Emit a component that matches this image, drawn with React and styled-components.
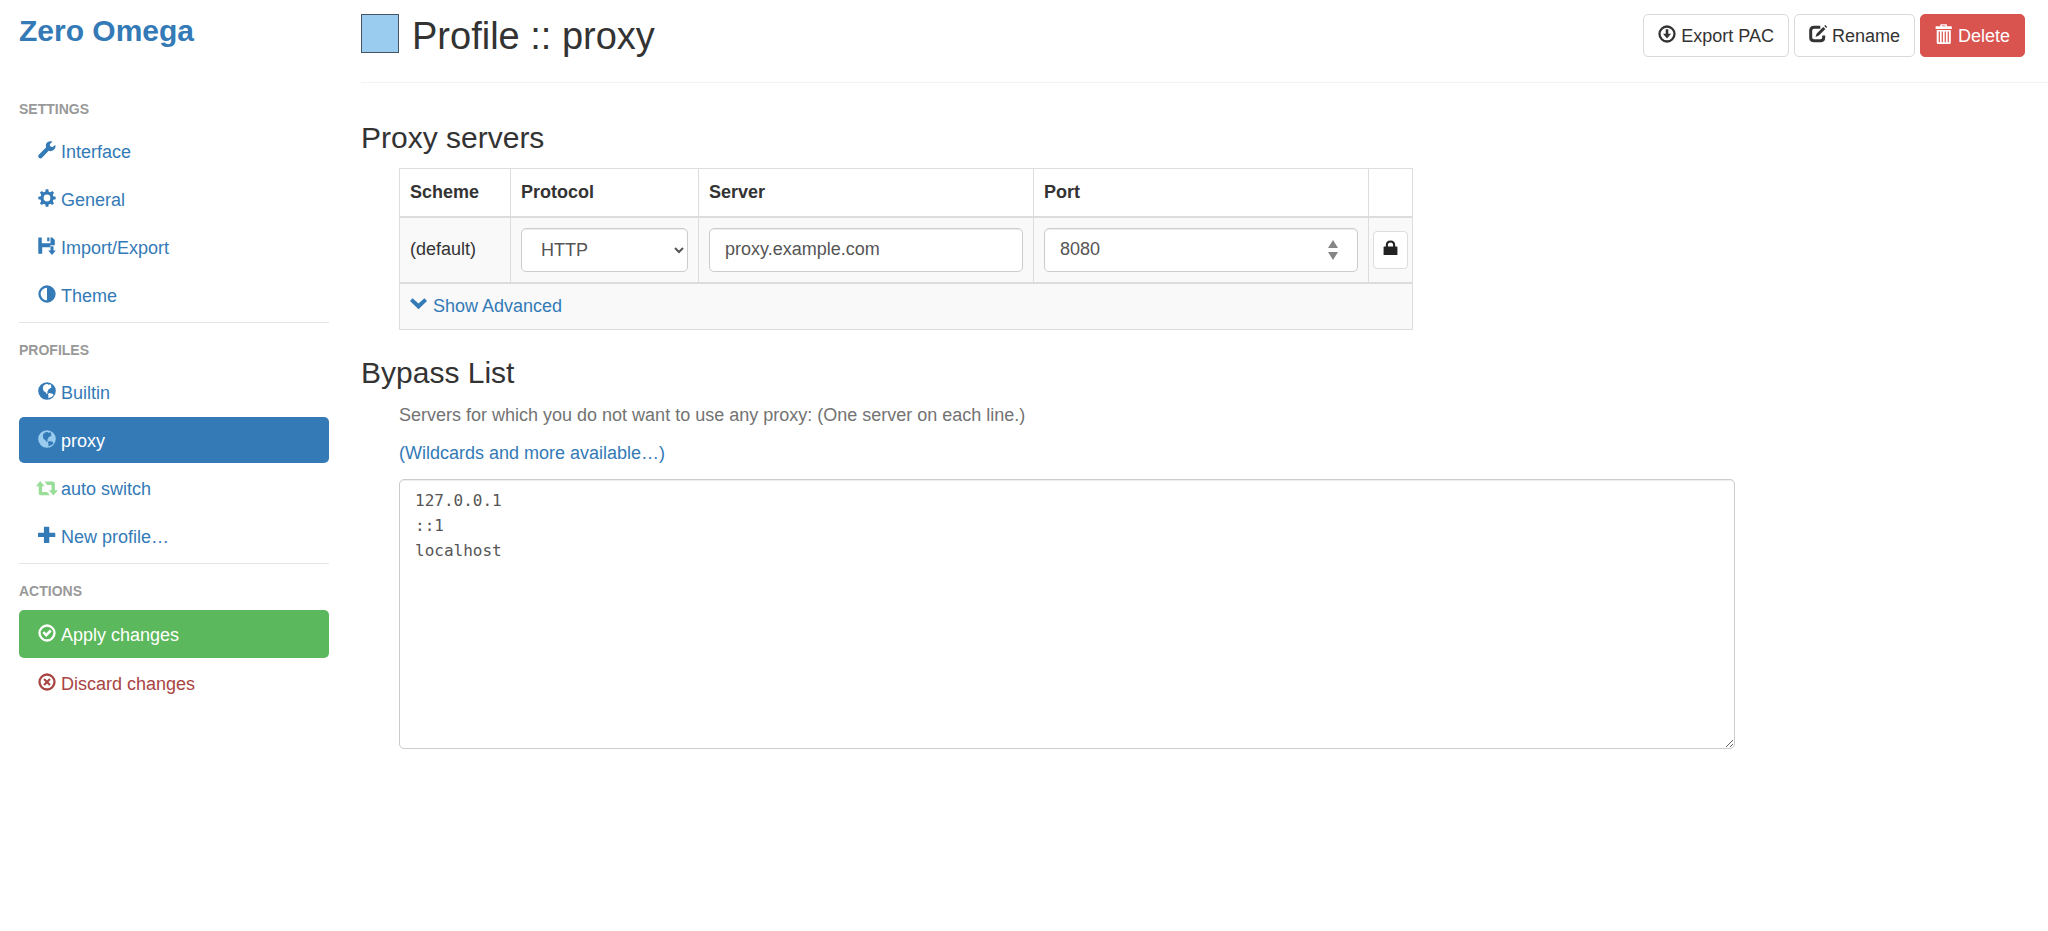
import React, { useState } from 'react';
import styled, { createGlobalStyle, css } from 'styled-components';

const palette = {
  text: '#333',
  link: '#337ab7',
  muted: '#737373',
  heading: '#999',
  border: '#ddd',
  control: '#ccc',
  field: '#555',
  stripe: '#f9f9f9',
  success: '#5cb85c',
  danger: '#d9534f',
  discard: '#a94442',
  proxy: '#99ccee',
  auto: '#99dd99',
};

const GlobalStyle = createGlobalStyle`
  *, *::before, *::after {
    box-sizing: border-box;
  }
  body {
    margin: 0;
    background: #fff;
    color: ${palette.text};
    font-family: 'Liberation Sans', Arial, sans-serif;
    font-size: 18px;
    line-height: 25px;
  }
  button, input, select, textarea {
    font: inherit;
  }
`;

const Layout = styled.div`
  display: flex;
  align-items: flex-start;
`;

/* icons */

const IconSvg = styled.svg`
  flex: none;
  width: 18px;
  height: 18px;
  margin-bottom: 4px;
  overflow: visible;
  fill: currentColor;
  color: ${(props) => props.$color || 'inherit'};
`;

const Ring = () => (
  <circle
    cx="9"
    cy="9"
    r="7.5"
    fill="none"
    stroke="currentColor"
    strokeWidth="2.3"
  />
);

const shapes = {
  wrench: (
    <path d="M17.4 3.9 14.6 6 12.3 5.6 11.8 3.3 14.3.8C12.3-.2 9.700.4 8.500 2.300 7.700 3.600 7.700 5 8.200 6.300L.8 13.700C0 14.600 0 15.900.9 16.800 1.800 17.700 3.100 17.700 4 16.800L10.700 9.800C12.200 10.500 14.200 10.200 15.600 9 17.100 7.700 17.900 5.700 17.400 3.900Z" />
  ),
  cog: (
    <>
      <circle
        cx="9"
        cy="9"
        r="5"
        fill="none"
        stroke="currentColor"
        strokeWidth="3.2"
      />
      {[0, 45, 90, 135, 180, 225, 270, 315].map((deg) => (
        <path
          key={deg}
          d="M7.200 3.200 7.700.3h2.600l.5 2.900z"
          transform={`rotate(${deg} 9 9)`}
        />
      ))}
    </>
  ),
  save: (
    <>
      <path d="M.3.500H3.800V6.300H12.500V.500H14.300L16.800 3V8.300H12.300V10.300H4.200V16.800H.3Z" />
      <path d="M9.200.500h2.200v3.800H9.200z" />
      <path d="M12.500 9.300h3v4.200h2.300L14 18l-3.800-4.500h2.300z" />
    </>
  ),
  adjust: (
    <>
      <Ring />
      <path d="M9 2a7 7 0 0 1 0 14z" />
    </>
  ),
  globe: (
    <path
      fillRule="evenodd"
      d="M9 .2a8.800 8.800 0 1 1 0 17.600A8.800 8.800 0 0 1 9 .2ZM7.400 2.300 5.400 3.700 4.800 6.200 5.600 9 7.600 10.300 8.500 12 9.700 11.300 9.200 9.600 10.300 9 9.900 7.900 11.900 6.600 13.700 5.200 12.700 4.200 13.500 3.100 11.800 2.300 10.700 2.900 9.800 1.900ZM11.400 11 9.900 12.100 10.500 14 10.300 16.200 13.600 15.100 15.700 12.900 14.500 11.800Z"
    />
  ),
  retweet: (
    <>
      <path d="M2.200 2.900 6.600 8.200H4.100V13.900H9L12 17.300H2.600Q.7 17.300.7 15.300V8.200H-2Z" />
      <path d="M6.500 3.500H14.600Q16.900 3.500 16.900 5.700V12.200H19.900L15.300 17.600 10.900 12.200H13.500V6.900H9.300Z" />
    </>
  ),
  plus: (
    <path d="M6.500.8h4.200q.6 0 .6.6V6.800h5.400q.6 0 .6.6v3q0 .6-.6.6h-5.400v5.400q0 .6-.6.6H6.500q-.6 0-.6-.6V11H.6q-.6 0-.6-.6v-3q0-.6.600-.6h5.300V1.400q0-.6.6-.6z" />
  ),
  check: (
    <>
      <Ring />
      <path d="m4.400 9 1.800-1.800 2 2 3.600-3.700 1.900 1.900-5.500 5.500z" />
    </>
  ),
  remove: (
    <>
      <Ring />
      <path d="m6.800 5.300L9 7.500l2.200-2.200 1.500 1.500L10.500 9l2.200 2.200-1.500 1.500L9 10.500l-2.200 2.200-1.500-1.500L7.500 9 5.300 6.800z" />
    </>
  ),
  download: (
    <>
      <Ring />
      <path d="M7.700 4.200h2.600V8.800h2.700L9 13.500 5 8.800h2.700z" />
    </>
  ),
  edit: (
    <>
      <path
        d="M11.300 2.300H5Q1.700 2.300 1.700 5.500V12.500Q1.700 15.700 5 15.700H11.500Q14.700 15.700 14.700 12.500V10.500"
        fill="none"
        stroke="currentColor"
        strokeWidth="3"
      />
      <path d="M14.200 1.900 16.400 4.100 9.900 10.600 6.500 11.900 7.700 8.400ZM15.200.9 16.200 0 18.200 2 17.300 3.100Z" />
    </>
  ),
  trash: (
    <path
      fillRule="evenodd"
      d="M6-.8H11.300Q12 -.8 12 0V1.200H16.300Q16.800 1.200 16.800 1.800V4H.6V1.800Q.6 1.200 1.100 1.200H5.300V0Q5.300-.8 6-.8ZM6.900.4V1.200H10.400V.4ZM1.700 5H15.800V17.500Q15.800 19 14.400 19H3.100Q1.700 19 1.700 17.500ZM3.700 6.500V17.300H4.900V6.500ZM6.700 6.500V17.300H7.900V6.500ZM9.700 6.500V17.300H10.900V6.500ZM12.700 6.500V17.300H13.900V6.500Z"
    />
  ),
  chevron: (
    <path d="M2.600 3.200 8.500 8.400 14.400 3.200 17 6 8.500 14.300 0 6Z" />
  ),
  lock: (
    <path
      fillRule="evenodd"
      d="M3.400 7.200V5.500Q3.400 0 9 0T14.600 5.500V7.200H16.200Q17.300 7.200 17.300 8.200V17.500H.7V8.200Q.7 7.200 1.800 7.200ZM5.900 7.200H12.100V5.500Q12.100 2.300 9 2.300T5.900 5.500Z"
    />
  ),
};

const Icon = ({ name, color }) => (
  <IconSvg viewBox="0 0 18 18" $color={color} aria-hidden="true">
    {shapes[name]}
  </IconSvg>
);

/* sidebar */

const Sidebar = styled.nav`
  flex: none;
  width: 361px;
  padding: 14px 32px 0 19px;
`;

const Brand = styled.a`
  display: block;
  margin-bottom: 52px;
  color: ${palette.link};
  font-size: 30px;
  font-weight: bold;
  line-height: 34px;
  text-decoration: none;
`;

const NavSection = styled.section`
  & + & {
    margin-top: 4px;
    padding-top: 18px;
    border-top: 1px solid #e5e5e5;
  }
`;

const NavTitle = styled.h2`
  margin: 0 0 10px;
  color: ${palette.heading};
  font-size: 14px;
  line-height: 18px;
  text-transform: uppercase;
`;

const NavList = styled.ul`
  display: flex;
  flex-direction: column;
  gap: 2px;
  margin: 0;
  padding: 0;
  list-style: none;
`;

const navTones = {
  active: css`
    background: ${palette.link};
    color: #fff;
  `,
  success: css`
    height: 48px;
    background: ${palette.success};
    color: #fff;
  `,
  discard: css`
    color: ${palette.discard};
  `,
};

const NavLink = styled.a`
  display: flex;
  align-items: center;
  gap: 5px;
  height: 46px;
  padding: 2px 19px 0;
  border-radius: 5px;
  color: ${palette.link};
  text-decoration: none;
  ${(props) => navTones[props.$tone]}
`;

const NavItem = ({ icon, iconColor, tone, children }) => (
  <li>
    <NavLink href="#" $tone={tone}>
      <Icon name={icon} color={iconColor} />
      {children}
    </NavLink>
  </li>
);

/* header */

const Main = styled.main`
  flex: 1;
  min-width: 0;
`;

const PageHeader = styled.header`
  display: flex;
  align-items: flex-start;
  gap: 13px;
  margin-bottom: 38px;
  padding: 14px 23px 23px 0;
  border-bottom: 1px solid #f2f2f2;
`;

const ColorButton = styled.input`
  flex: none;
  width: 38px;
  height: 39px;
  padding: 0;
  border: 1px solid #456;
  background: none;
  &::-webkit-color-swatch-wrapper {
    padding: 0;
  }
  &::-webkit-color-swatch {
    border: 0;
  }
`;

const Title = styled.h1`
  flex: 1;
  margin: 0;
  font-size: 38px;
  font-weight: normal;
  line-height: 45px;
`;

const Actions = styled.div`
  display: flex;
  gap: 5px;
`;

const Button = styled.button`
  display: flex;
  align-items: center;
  gap: 5px;
  height: 43px;
  padding: 1px 14px 0;
  border: 1px solid ${(props) => (props.$danger ? '#d9534f' : '#d9d9d9')};
  border-radius: 5px;
  background: ${(props) => (props.$danger ? palette.danger : '#fff')};
  color: ${(props) => (props.$danger ? '#fff' : palette.text)};
`;

/* content */

const SectionTitle = styled.h3`
  margin: 0 0 14px;
  font-size: 30px;
  font-weight: normal;
  line-height: 33px;
`;

const SectionBody = styled.div`
  margin: 0 0 26px 38px;
`;

const Table = styled.table`
  border-collapse: collapse;
  border: 1px solid ${palette.border};
  th,
  td {
    padding: 10px;
    border: 1px solid ${palette.border};
    text-align: left;
    vertical-align: middle;
  }
  thead th {
    height: 48px;
    border-bottom-width: 2px;
  }
  tbody {
    background: ${palette.stripe};
  }
  tbody + tbody {
    border-top: 2px solid ${palette.border};
  }
`;

const SchemeHead = styled.th`
  width: 111px;
`;

const LockCell = styled.td`
  && {
    padding: 4px;
  }
`;

const control = css`
  display: block;
  height: 44px;
  padding: 0 15px;
  border: 1px solid ${palette.control};
  border-radius: 5px;
  background: #fff;
  color: ${palette.field};
  box-shadow: inset 0 1px 1px rgba(0, 0, 0, 0.075);
`;

const Select = styled.select`
  ${control}
  width: 167px;
`;

const Input = styled.input`
  ${control}
  width: 314px;
  appearance: textfield;
  &::-webkit-inner-spin-button {
    display: none;
  }
`;

const NumberField = styled.div`
  position: relative;
`;

const Spinner = styled.svg`
  position: absolute;
  top: 12px;
  right: 19px;
  width: 12px;
  height: 20px;
  fill: #858585;
  pointer-events: none;
`;

const LockButton = styled.button`
  display: flex;
  align-items: center;
  justify-content: center;
  width: 35px;
  height: 38px;
  padding: 0;
  border: 1px solid ${palette.border};
  border-radius: 4px;
  background: #fff;
  color: #222;
  svg {
    width: 15px;
    height: 16px;
  }
`;

const TextLink = styled.a`
  display: flex;
  align-items: center;
  gap: 5px;
  width: fit-content;
  color: ${palette.link};
  text-decoration: none;
`;

const Help = styled.p`
  margin: 0 0 13px;
  color: ${palette.muted};
`;

const BypassArea = styled.textarea`
  ${control}
  width: 81%;
  height: 270px;
  padding: 8px 15px;
  font-family: 'DejaVu Sans Mono', monospace;
  font-size: 16px;
  resize: vertical;
`;

const App = () => {
  const [color, setColor] = useState(palette.proxy);
  const [bypass, setBypass] = useState('127.0.0.1\n::1\nlocalhost');

  return (
    <Layout>
      <GlobalStyle />
      <Sidebar>
        <Brand href="#">Zero Omega</Brand>
        <NavSection>
          <NavTitle>Settings</NavTitle>
          <NavList>
            <NavItem icon="wrench">Interface</NavItem>
            <NavItem icon="cog">General</NavItem>
            <NavItem icon="save">Import/Export</NavItem>
            <NavItem icon="adjust">Theme</NavItem>
          </NavList>
        </NavSection>
        <NavSection>
          <NavTitle>Profiles</NavTitle>
          <NavList>
            <NavItem icon="globe">Builtin</NavItem>
            <NavItem icon="globe" iconColor={color} tone="active">
              proxy
            </NavItem>
            <NavItem icon="retweet" iconColor={palette.auto}>
              auto switch
            </NavItem>
            <NavItem icon="plus">New profile…</NavItem>
          </NavList>
        </NavSection>
        <NavSection>
          <NavTitle>Actions</NavTitle>
          <NavList>
            <NavItem icon="check" tone="success">
              Apply changes
            </NavItem>
            <NavItem icon="remove" tone="discard">
              Discard changes
            </NavItem>
          </NavList>
        </NavSection>
      </Sidebar>
      <Main>
        <PageHeader>
          <ColorButton
            type="color"
            aria-label="Profile color"
            value={color}
            onChange={(e) => setColor(e.target.value)}
          />
          <Title>Profile :: proxy</Title>
          <Actions>
            <Button type="button">
              <Icon name="download" />
              Export PAC
            </Button>
            <Button type="button">
              <Icon name="edit" />
              Rename
            </Button>
            <Button type="button" $danger>
              <Icon name="trash" />
              Delete
            </Button>
          </Actions>
        </PageHeader>

        <SectionTitle>Proxy servers</SectionTitle>
        <SectionBody>
          <Table>
            <thead>
              <tr>
                <SchemeHead>Scheme</SchemeHead>
                <th>Protocol</th>
                <th>Server</th>
                <th>Port</th>
                <th />
              </tr>
            </thead>
            <tbody>
              <tr>
                <td>(default)</td>
                <td>
                  <Select aria-label="Protocol" defaultValue="HTTP">
                    <option>HTTP</option>
                    <option>HTTPS</option>
                    <option>SOCKS4</option>
                    <option>SOCKS5</option>
                  </Select>
                </td>
                <td>
                  <Input
                    type="text"
                    aria-label="Server"
                    defaultValue="proxy.example.com"
                  />
                </td>
                <td>
                  <NumberField>
                    <Input type="number" aria-label="Port" defaultValue="8080" />
                    <Spinner viewBox="0 0 12 20" aria-hidden="true">
                      <path d="M6 0 11 8H1zM6 20 1 12h10z" />
                    </Spinner>
                  </NumberField>
                </td>
                <LockCell>
                  <LockButton type="button" aria-label="Authentication">
                    <Icon name="lock" />
                  </LockButton>
                </LockCell>
              </tr>
            </tbody>
            <tbody>
              <tr>
                <td colSpan="5">
                  <TextLink href="#">
                    <Icon name="chevron" />
                    Show Advanced
                  </TextLink>
                </td>
              </tr>
            </tbody>
          </Table>
        </SectionBody>

        <SectionTitle>Bypass List</SectionTitle>
        <SectionBody>
          <Help id="bypass-help">
            Servers for which you do not want to use any proxy: (One server on
            each line.)
          </Help>
          <Help>
            <TextLink href="#">(Wildcards and more available…)</TextLink>
          </Help>
          <BypassArea
            aria-label="Bypass List"
            aria-describedby="bypass-help"
            spellCheck="false"
            value={bypass}
            onChange={(e) => setBypass(e.target.value)}
          />
        </SectionBody>
      </Main>
    </Layout>
  );
};

export default App;
